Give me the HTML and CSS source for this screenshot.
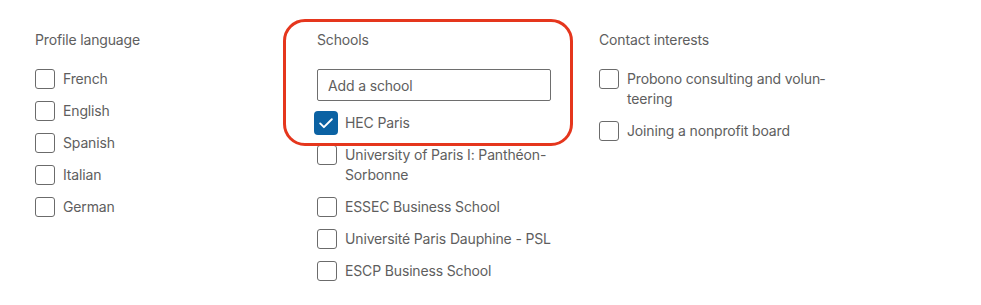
FILE: index.html
```html
<!DOCTYPE html>
<html lang="en">
<head>
  <meta charset="UTF-8">
  <title>Profile filters</title>
  <link rel="stylesheet" href="styles.css">
</head>
<body>
  <div class="filters">
    <div class="filter-col">
      <h3 class="filter-title">Profile language</h3>
      <ul class="check-list">
        <li class="check-item"><span class="box"></span><span class="label">French</span></li>
        <li class="check-item"><span class="box"></span><span class="label">English</span></li>
        <li class="check-item"><span class="box"></span><span class="label">Spanish</span></li>
        <li class="check-item"><span class="box"></span><span class="label">Italian</span></li>
        <li class="check-item"><span class="box"></span><span class="label">German</span></li>
      </ul>
    </div>

    <div class="filter-col schools">
      <div class="highlight"></div>
      <h3 class="filter-title">Schools</h3>
      <input type="text" class="school-input" placeholder="Add a school">
      <ul class="check-list">
        <li class="check-item checked">
          <span class="box">
            <svg viewBox="0 0 24 24" width="20" height="20"><path d="M5 12.5l4.5 4.5L19 7.5" fill="none" stroke="#fff" stroke-width="2.3" stroke-linecap="round" stroke-linejoin="round"/></svg>
          </span>
          <span class="label">HEC Paris</span>
        </li>
        <li class="check-item"><span class="box"></span><span class="label">University of Paris I: Panthéon-Sorbonne</span></li>
        <li class="check-item"><span class="box"></span><span class="label">ESSEC Business School</span></li>
        <li class="check-item"><span class="box"></span><span class="label">Université Paris Dauphine - PSL</span></li>
        <li class="check-item"><span class="box"></span><span class="label">ESCP Business School</span></li>
      </ul>
    </div>

    <div class="filter-col">
      <h3 class="filter-title">Contact interests</h3>
      <ul class="check-list">
        <li class="check-item"><span class="box"></span><span class="label">Probono consulting and volun&shy;teering</span></li>
        <li class="check-item"><span class="box"></span><span class="label">Joining a nonprofit board</span></li>
      </ul>
    </div>
  </div>
</body>
</html>
```

FILE: styles.css
```css
body {
  margin: 0;
  background: #fff;
  font-family: Inter, 'Noto Sans', sans-serif;
  color: #5e5e5e;
  font-size: 14px;
  letter-spacing: -0.15px;
}

.filters {
  display: flex;
  gap: 48px;
  padding: 30px 0 0 35px;
}

.filter-col {
  width: 234px;
  position: relative;
}

.filter-title {
  margin: 0 0 19px;
  font-size: 14px;
  font-weight: 400;
  line-height: 20px;
  color: #5e5e5e;
}

.check-list {
  list-style: none;
  margin: 0;
  padding: 0;
  display: flex;
  flex-direction: column;
  gap: 12px;
}

.check-item {
  display: flex;
  align-items: flex-start;
  gap: 8px;
  line-height: 20px;
}

.box {
  flex: none;
  width: 20px;
  height: 20px;
  box-sizing: border-box;
  border: 1.5px solid #6b6b6b;
  border-radius: 3px;
  background: #fff;
}

.label {
  flex: 1;
}

.check-item.checked {
  margin-left: -3px;
  gap: 7px;
  align-items: center;
  margin-top: -2px;
  margin-bottom: -2px;
}

.check-item.checked .box {
  width: 24px;
  height: 24px;
  border: none;
  border-radius: 4px;
  background: #0b62a3;
  display: flex;
  align-items: center;
  justify-content: center;
}

.school-input {
  display: block;
  width: 234px;
  height: 32px;
  box-sizing: border-box;
  margin: 0 0 12px;
  padding: 0 10px;
  border: 1px solid #6e6e6e;
  border-radius: 2px;
  font-family: inherit;
  font-size: 14px;
  letter-spacing: -0.15px;
  color: #5e5e5e;
}

.school-input::placeholder {
  color: #5e5e5e;
}

/* red annotation around the schools block */
.highlight {
  position: absolute;
  left: -34px;
  top: -11px;
  width: 290px;
  height: 127px;
  box-sizing: border-box;
  border: 3px solid #e5361d;
  border-radius: 22px;
  pointer-events: none;
  z-index: 2;
}
```
